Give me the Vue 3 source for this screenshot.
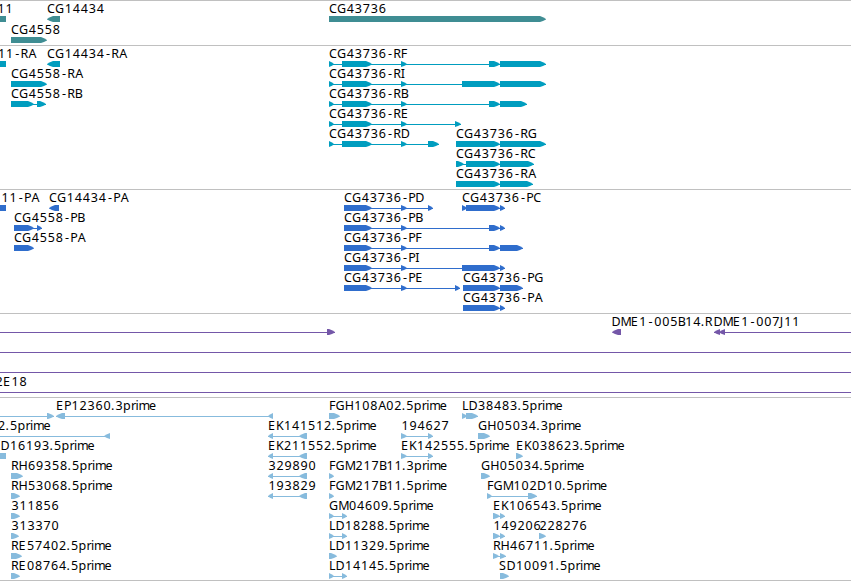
<script setup>
// Horizontal advance of each label character, in pixels
const advances = {
  C: 8, G: 9.3, H: 9, D: 9, M: 10.3, R: 7.5, P: 7, A: 8, F: 6.5, E: 8, K: 7.5, L: 6.5, S: 7.5, B: 7, I: 3, J: 4,
  '-': 7, '.': 4, p: 8, r: 4.5, i: 3, m: 10.5, e: 7,
}

// Offset of a glyph inside its cell
const bearings = { '-': 1.8, A: 0.5 }

function glyphPositions(text, start) {
  let x = start
  return [...text].map((ch) => {
    const at = x + (/\d/.test(ch) ? 0.5 : bearings[ch] ?? 0)
    x += advances[ch] ?? 8
    return at.toFixed(1)
  }).join(' ')
}

// item: [row, label, labelX, features]
// feature: [start, end, direction] where direction is 1, -1 or 0 (no tip)
const f = (...pairs) => pairs.map(([a, b]) => [a, b, 1])
const r = (...pairs) => pairs.map(([a, b]) => [a, b, -1])
const block = [[-4, 6, 0]]
const head = [[329, 334], [342, 372], [401, 407]]
const phead = [[344, 372], [401, 407]]

const tracks = [
  {
    name: 'gene', height: 44, pitch: 21, items: [
      [0, '11', -3, block],
      [0, 'CG14434', 47, r([47, 60])],
      [0, 'CG43736', 329, f([329, 546])],
      [1, 'CG4558', 11, f([11, 47])],
    ],
  },
  {
    name: 'transcript', height: 143, pitch: 20, items: [
      [0, '11-RA', -2.5, block],
      [0, 'CG14434-RA', 47, r([47, 60])],
      [1, 'CG4558-RA', 11, f([11, 47])],
      [2, 'CG4558-RB', 11, f([11, 34], [37, 46])],
      [0, 'CG43736-RF', 329, f(...head, [489, 500], [500, 546])],
      [1, 'CG43736-RI', 329, f(...head, [462, 500], [500, 546])],
      [2, 'CG43736-RB', 329, f(...head, [489, 500], [500, 527])],
      [3, 'CG43736-RE', 329, f(...head, [455, 461])],
      [4, 'CG43736-RD', 329, f(...head, [428, 439])],
      [4, 'CG43736-RG', 456, f([456, 500], [500, 546])],
      [5, 'CG43736-RC', 456, f([456, 464], [466, 500], [500, 534])],
      [6, 'CG43736-RA', 456, f([456, 500], [500, 533])],
    ],
  },
  {
    name: 'protein', height: 123, pitch: 20, items: [
      [0, '11-PA', 1, block],
      [0, 'CG14434-PA', 49, r([49, 59])],
      [1, 'CG4558-PB', 14, f([14, 34], [37, 42])],
      [2, 'CG4558-PA', 14, f([14, 34])],
      [0, 'CG43736-PD', 344, f(...phead, [428, 433])],
      [1, 'CG43736-PB', 344, f(...phead, [489, 500], [500, 505])],
      [2, 'CG43736-PF', 344, f(...phead, [489, 500], [500, 523])],
      [3, 'CG43736-PI', 344, f(...phead, [462, 500], [500, 505])],
      [4, 'CG43736-PE', 344, f(...phead, [455, 460])],
      [0, 'CG43736-PC', 462, f([462, 467], [466, 500], [500, 505])],
      [4, 'CG43736-PG', 463, f([463, 500], [500, 523])],
      [5, 'CG43736-PA', 463, f([463, 500], [500, 505])],
    ],
  },
  {
    name: 'bac', height: 83, pitch: 20, items: [
      [0, '', 0, f([-9, -4], [327, 335])],
      [0, 'DME1-005B14.R', 611.5, r([612, 621])],
      [0, 'DME1-007J11', 713.5, r([714, 720], [719, 725], [860, 866])],
      [1, '', 0, f([-9, -4], [860, 866])],
      [2, '', 0, f([-9, -4], [860, 866])],
      [3, '2E18', -5, f([-9, -4], [860, 866])],
    ],
  },
  {
    name: 'est', height: 182, pitch: 20, items: [
      [0, '', 0, f([-9, -4], [47, 54])],
      [0, 'EP12360.3prime', 56, r([56, 65], [268, 273])],
      [0, 'FGH108A02.5prime', 329, f([329, 340])],
      [0, 'LD38483.5prime', 462, f([462, 467], [466, 478])],
      [1, '2.5prime', -2.5, r([-9, -4], [104, 110])],
      [1, 'EK141512.5prime', 268, r([268, 273], [299, 307])],
      [1, '194627', 401, f([401, 407], [428, 433])],
      [1, 'GH05034.3prime', 478, f([478, 490])],
      [2, 'D16193.5prime', 0.5, block],
      [2, 'EK211552.5prime', 268, r([268, 273], [299, 307])],
      [2, 'EK142555.5prime', 401, f([401, 407], [428, 433])],
      [2, 'EK038623.5prime', 516, f([516, 523])],
      [3, 'RH69358.5prime', 11, f([11, 23])],
      [3, '329890', 268, r([268, 273], [299, 307])],
      [3, 'FGM217B11.3prime', 329, f([329, 334])],
      [3, 'GH05034.5prime', 481, f([481, 490])],
      [4, 'RH53068.5prime', 11, f([11, 20])],
      [4, '193829', 268, r([268, 273], [299, 307])],
      [4, 'FGM217B11.5prime', 329, f([329, 334])],
      [4, 'FGM102D10.5prime', 487, f([487, 492], [528, 537])],
      [5, '311856', 11, f([11, 20])],
      [5, 'GM04609.5prime', 329, f([329, 334], [342, 347])],
      [5, 'EK106543.5prime', 493, f([493, 500], [500, 505])],
      [6, '313370', 11, f([11, 19])],
      [6, 'LD18288.5prime', 329, f([329, 334], [342, 347])],
      [6, '149206', 493, f([493, 500], [500, 505])],
      [6, '228276', 539, f([539, 546])],
      [7, 'RE57402.5prime', 11, f([11, 22])],
      [7, 'LD11329.5prime', 329, f([329, 337])],
      [7, 'RH46711.5prime', 493, f([493, 499], [500, 506])],
      [8, 'RE08764.5prime', 11, f([11, 20])],
      [8, 'LD14145.5prime', 329, f([329, 334], [342, 347])],
      [8, 'SD10091.5prime', 499, f([500, 509])],
    ],
  },
]

// Arrow bar outline: flat body with a blunt shoulder and a narrow point
function shape([a, b, dir]) {
  if (dir === 0) return `${a},15 ${b},15 ${b},21 ${a},21`
  const tip = Math.min(6, b - a)
  const mid = tip / 2
  if (dir > 0) return `${a},15 ${b - tip},15 ${b - mid},16.2 ${b},18 ${b},18.6 ${b - mid},20 ${b - tip},21 ${a},21`
  return `${b},15 ${a + tip},15 ${a + mid},16.2 ${a},18 ${a},18.6 ${a + mid},20 ${a + tip},21 ${b},21`
}
</script>

<template>
  <main class="browser">
    <section v-for="t in tracks" :key="t.name" class="track" :class="t.name">
      <svg class="canvas" width="851" :height="t.height">
        <g v-for="([row, label, x, parts], n) in t.items" :key="n" :transform="`translate(0 ${row * t.pitch})`">
          <rect
            v-if="parts.length > 1"
            :x="parts[0][0]" y="18" height="1"
            :width="parts[parts.length - 1][1] - parts[0][0]"
          />
          <polygon v-for="(p, i) in parts" :key="i" :points="shape(p)" />
          <text v-if="label" :x="glyphPositions(label, x)" y="12">{{ label }}</text>
        </g>
      </svg>
    </section>
  </main>
</template>

<style>
body {
  background: #fff;
}
</style>

<style scoped>
.browser {
  width: 851px;
  height: 581px;
  overflow: hidden;
  box-sizing: border-box;
}
.track {
  border-top: 1px solid #c0c0c0;
}
.track:last-child {
  border-bottom: 1px solid #c0c0c0;
}
.canvas {
  display: block;
}
.gene { fill: #3f8d93; }
.transcript { fill: #009dbf; }
.protein { fill: #2f6dcc; }
.bac { fill: #7457a8; }
.est { fill: #87bbdd; }
text {
  fill: #000;
  font-family: "Noto Sans", "DejaVu Sans", sans-serif;
  font-size: 12.5px;
}
</style>
